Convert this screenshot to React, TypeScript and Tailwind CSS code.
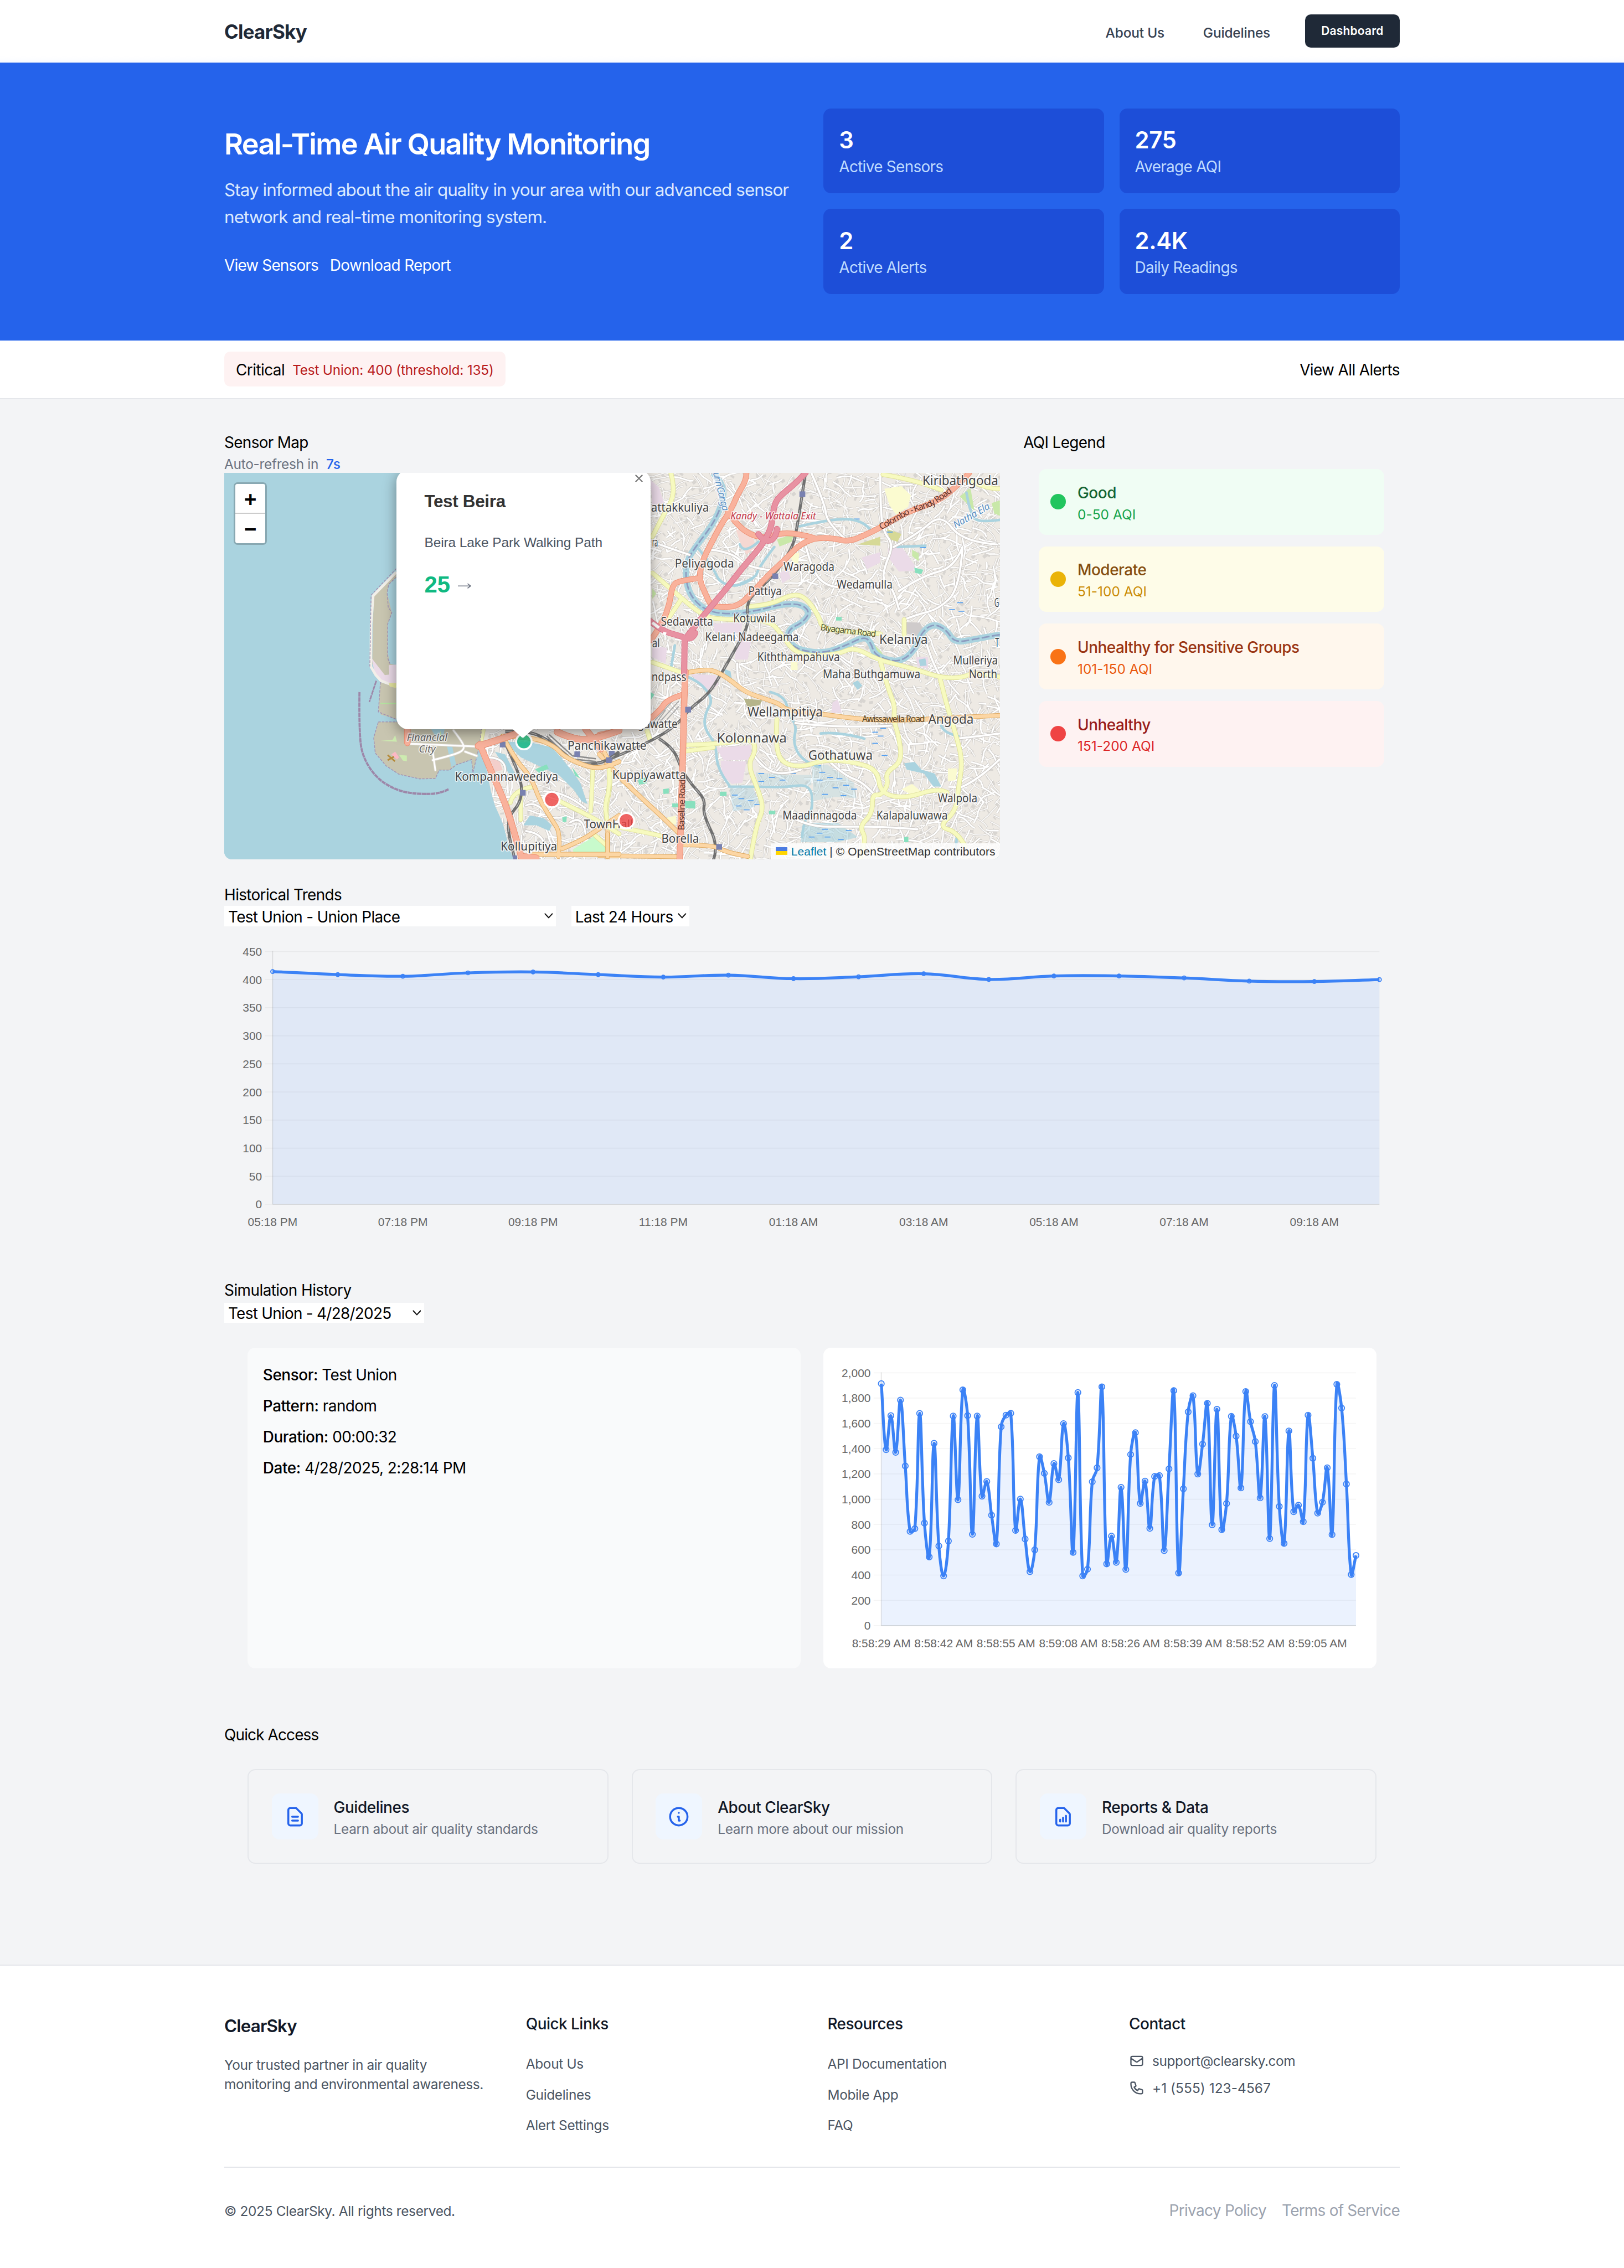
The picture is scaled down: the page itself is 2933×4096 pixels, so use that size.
import React from "react";

type Pt = [number, number];

/* Lowers a line of text by one pixel without changing the height of its row. */
const DROP = "pt-px -mb-px";

/* ---------- shared icons ---------- */

const ICONS = {
  document:
    "M9 12h6m-6 4h6m2 5H7a2 2 0 01-2-2V5a2 2 0 012-2h5.586a1 1 0 01.707.293l5.414 5.414a1 1 0 01.293.707V19a2 2 0 01-2 2z",
  info: "M13 16h-1v-4h-1m1-4h.01M21 12a9 9 0 11-18 0 9 9 0 0118 0z",
  report:
    "M9 17v-2m3 2v-4m3 4v-6m2 10H7a2 2 0 01-2-2V5a2 2 0 012-2h5.586a1 1 0 01.707.293l5.414 5.414a1 1 0 01.293.707V19a2 2 0 01-2 2z",
  mail: "M3 8l7.89 5.26a2 2 0 002.22 0L21 8M5 19h14a2 2 0 002-2V7a2 2 0 00-2-2H5a2 2 0 00-2 2v10a2 2 0 002 2z",
  phone:
    "M3 5a2 2 0 012-2h3.28a1 1 0 01.948.684l1.498 4.493a1 1 0 01-.502 1.21l-2.257 1.13a11.042 11.042 0 005.516 5.516l1.13-2.257a1 1 0 011.21-.502l4.493 1.498a1 1 0 01.684.949V19a2 2 0 01-2 2h-1C9.716 21 3 14.284 3 6V5z",
};

function Icon({ d, className }: { d: string; className: string }) {
  return (
    <svg viewBox="0 0 24 24" fill="none" stroke="currentColor" strokeWidth="2" strokeLinecap="round" strokeLinejoin="round" className={className}>
      <path d={d} />
    </svg>
  );
}

/* ---------- header and hero ---------- */

function Header() {
  return (
    <header className="relative z-10 -mb-px h-[65px] bg-linear-to-b from-white from-90% to-[#f9fbff]">
      <div className="mx-auto flex h-16 w-[1216px] items-center">
        <span className="pt-0.5 text-[20px] leading-7 font-bold tracking-[-0.023em] text-[#1f2937]">ClearSky</span>
        <nav className="ml-auto flex items-center text-[14px] leading-5 font-medium tracking-[-0.008em] text-[#374151]">
          <a className="mt-1">About Us</a>
          <a className="mt-1 ml-10">Guidelines</a>
          <a className="ml-9 flex h-[34px] w-[98px] items-center justify-center rounded-[6px] bg-[#1f2937] pt-px text-[12px] font-semibold tracking-[0.01em] text-white">
            Dashboard
          </a>
        </nav>
      </div>
    </header>
  );
}

const STATS = [
  ["3", "Active Sensors"],
  ["275", "Average AQI"],
  ["2", "Active Alerts"],
  ["2.4K", "Daily Readings"],
];

function Hero() {
  return (
    <section className="bg-[#2563eb] py-12 text-white">
      <div className="mx-auto grid h-48 w-[1216px] grid-cols-2 items-center gap-6">
        <div className={DROP}>
          <h1 className="mb-4 text-[30px] leading-9 font-semibold tracking-[-0.033em] whitespace-nowrap">Real-Time Air Quality Monitoring</h1>
          <p className="mb-6 text-[18px] leading-7 tracking-[-0.0301em] whitespace-nowrap text-[#dbeafe]">
            Stay informed about the air quality in your area with our advanced sensor
            <br />
            network and real-time monitoring system.
          </p>
          <div className="flex gap-3">
            <span className="tracking-[-0.03em]">View Sensors</span>
            <span className="tracking-[-0.023em]">Download Report</span>
          </div>
        </div>
        <div className="grid grid-cols-2 gap-4">
          {STATS.map(([value, label]) => (
            <div key={label} className="rounded-lg bg-[#1d4ed8] p-4">
              <div className={DROP}>
                <div className="text-[24px] leading-8 font-semibold tracking-[-0.01em]">{value}</div>
                <div className="leading-6 tracking-[-0.025em] text-[#bfdbfe]">{label}</div>
              </div>
            </div>
          ))}
        </div>
      </div>
    </section>
  );
}

function AlertBar() {
  return (
    <section className="border-b-[1.2px] border-[#e5e7eb] bg-white py-3">
      <div className="mx-auto flex w-[1216px] items-center justify-between">
        <div className="flex h-9 items-center gap-2 rounded-md bg-[#fef2f2] px-3">
          <span className={`tracking-[-0.02em] ${DROP}`}>Critical</span>
          <span className={`text-[14px] leading-5 tracking-[-0.0095em] text-[#b91c1c] ${DROP}`}>Test Union: 400 (threshold: 135)</span>
        </div>
        <span className={`tracking-[-0.022em] ${DROP}`}>View All Alerts</span>
      </div>
    </section>
  );
}

/* ---------- map ---------- */

const p = (pts: number[]) => {
  let d = "";
  for (let i = 0; i < pts.length; i += 2) d += `${i ? "L" : "M"}${pts[i]} ${pts[i + 1]}`;
  return d;
};

/* Rounded polyline: quadratic curves through segment midpoints. */
const smooth = (pts: number[]) => {
  if (pts.length < 6) return p(pts);
  let d = `M${pts[0]} ${pts[1]}`;
  for (let i = 2; i < pts.length - 2; i += 2) {
    const last = i === pts.length - 4;
    const mx = last ? pts[i + 2] : (pts[i] + pts[i + 2]) / 2;
    const my = last ? pts[i + 3] : (pts[i + 1] + pts[i + 3]) / 2;
    d += `Q${pts[i]} ${pts[i + 1]} ${mx} ${my}`;
  }
  return d;
};

function random(seed: number) {
  let s = seed;
  return () => {
    s = (s * 1664525 + 1013904223) % 4294967296;
    return s / 4294967296;
  };
}

const MINOR = (() => {
  const r = random(41);
  let streets = "";
  let lanes = "";
  let blocks = "";
  for (let gy = -4; gy < 404; gy += 8.5) {
    for (let gx = 266; gx < 806; gx += 8.5) {
      if (gx < 436 && gy < 262) continue;
      let x = gx + r() * 8;
      let y = gy + r() * 8;
      const base = Math.sin(gx / 60) * 0.6 + Math.cos(gy / 50) * 0.6 + (r() < 0.5 ? 0 : Math.PI / 2);
      const x0 = x;
      const y0 = y;
      let d = `M${x.toFixed(1)} ${y.toFixed(1)}`;
      let a = base;
      const n = 2 + Math.floor(r() * 3);
      for (let k = 0; k < n; k++) {
        a += (r() - 0.5) * 0.9;
        const len = 3 + r() * 6;
        x += Math.cos(a) * len;
        y += Math.sin(a) * len;
        d += `L${x.toFixed(1)} ${y.toFixed(1)}`;
      }
      if (r() < 0.4) streets += d;
      else lanes += d;
      blocks += `M${(x0 + 2).toFixed(1)} ${(y0 + 3).toFixed(1)}l${(r() * 6 - 3).toFixed(1)} ${(r() * 6 - 3).toFixed(1)}`;
    }
  }
  return { streets, lanes, blocks };
})();

const COLLECTORS = [
  [1060, 34, 1060, 150, 1070, 260, 1110, 310, 1075, 400, 1070, 450, 1110, 480, 1130, 560],
  [800, 34, 850, 150, 860, 230, 940, 300],
  [1110, 320, 1200, 270, 1290, 190, 1370, 300, 1500, 310],
  [780, 320, 800, 400, 850, 470, 950, 480, 1060, 460],
  [1130, 490, 1220, 430, 1340, 400, 1370, 320],
  [1370, 320, 1360, 480, 1280, 560, 1200, 580, 1150, 600],
  [1230, 680, 1260, 780, 1290, 825],
  [520, 770, 520, 850, 560, 870, 600, 900],
  [740, 1000, 900, 1020, 1100, 1010],
  [580, 1120, 620, 1180, 700, 1200, 760, 1180],
  [700, 1350, 780, 1400, 950, 1400, 1060, 1400, 1200, 1410],
  [1350, 1060, 1440, 1050, 1510, 1040],
  [1360, 1250, 1430, 1220, 1510, 1140],
  [420, 330, 500, 340, 560, 400, 650, 410],
  [200, 300, 280, 330, 340, 350],
  [860, 1140, 920, 1200, 1000, 1230, 1040, 1280],
];
const YELLOW_E = [
  [200, 420, 290, 500, 390, 585, 450, 600, 640, 600, 690, 660, 730, 720, 790, 740, 900, 735, 960, 705, 1050, 755, 1130, 775, 1200, 795, 1290, 825, 1370, 825, 1420, 800, 1510, 822],
  [560, 550, 640, 545, 730, 500, 780, 515, 830, 590, 840, 635, 960, 650, 1060, 655],
  [270, 34, 290, 110, 240, 200, 200, 280],
  [1070, 40, 1200, 62, 1290, 100],
  [1400, 65, 1460, 95, 1512, 95],
  [1060, 760, 1090, 870, 1115, 930, 1110, 990, 1130, 1050, 1142, 1150, 1080, 1190, 1090, 1240, 1060, 1280, 1030, 1275, 1030, 1350, 980, 1400, 1010, 1450, 980, 1530],
  [1285, 825, 1310, 930, 1350, 1060, 1370, 1150, 1355, 1250, 1345, 1340, 1280, 1400, 1350, 1420, 1380, 1475],
  [670, 985, 665, 1060, 680, 1150, 760, 1172, 850, 1140, 960, 1150, 1050, 1180, 1060, 1270, 1150, 1292, 1280, 1250, 1312, 1268],
  [325, 1085, 460, 1080, 580, 1060, 590, 1110, 560, 1160, 600, 1260, 620, 1330, 590, 1400, 570, 1525],
  [325, 1108, 430, 1094],
  [1150, 600, 1150, 660],
  [60, 1400, 130, 1412, 230, 1435],
  [40, 1180, 42, 1250, 20, 1340, 32, 1400],
  [200, 765, 320, 808],
  [310, 520, 250, 612],
  [180, 1030, 190, 1060],
];
const TRUNK_E = [
  [555, 34, 555, 60, 520, 120, 500, 170, 455, 240, 420, 310, 390, 370, 375, 440, 400, 500, 420, 545, 455, 552, 520, 550, 570, 505, 640, 425, 700, 370, 750, 315, 810, 285, 880, 285, 940, 300, 1000, 275, 1060, 245, 1160, 185, 1260, 150, 1330, 105, 1395, 34],
  [485, 185, 520, 235, 570, 272, 620, 285, 720, 258, 810, 285],
  [375, 440, 300, 450, 275, 470, 265, 540, 240, 610, 195, 680],
  [315, 890, 255, 910, 230, 950, 190, 985],
  [0, 1045, 70, 1030],
];
const MOTOR_E = [
  [778, 34, 740, 75, 690, 115, 660, 150, 650, 240, 630, 285, 600, 330, 540, 400, 480, 480, 430, 540, 380, 600, 335, 660],
  [190, 605, 240, 645, 300, 662, 350, 680, 362, 652],
  [322, 670, 320, 810],
  [600, 270, 620, 300, 665, 290, 670, 250],
];
const ORANGE_E = [
  [330, 805, 400, 792, 440, 800, 490, 830, 550, 880, 620, 905, 680, 925, 705, 950, 840, 965, 980, 985, 1100, 990, 1240, 985, 1512, 970],
  [90, 1222, 170, 1300, 240, 1365, 300, 1425],
  [310, 1470, 430, 1470, 480, 1500, 560, 1515],
  [0, 1120, 40, 1168, 95, 1228],
  [32, 1400, 32, 1530],
  [0, 1512, 300, 1516],
];
const RIVER = [430, 34, 470, 80, 465, 150, 430, 230, 370, 310, 330, 370, 325, 450, 350, 520, 410, 570, 500, 580, 600, 565, 690, 540, 760, 540, 795, 570, 770, 610, 710, 640, 715, 690, 760, 720, 850, 730, 930, 700, 1000, 665, 1025, 690, 1040, 740, 1130, 768, 1190, 720, 1215, 650, 1260, 615, 1310, 640, 1340, 690, 1420, 675, 1512, 658];
const STREAMS = [
  [535, 460, 590, 440, 600, 400, 660, 320],
  [755, 240, 880, 210, 990, 215, 1020, 250],
  [370, 320, 430, 400, 455, 460, 530, 475, 580, 440],
  [1385, 110, 1400, 200, 1440, 225, 1512, 215],
  [645, 880, 700, 895, 715, 970, 745, 1010, 730, 1080, 770, 1150, 830, 1170],
  [330, 820, 380, 840, 430, 910, 400, 960, 395, 1020, 440, 1080, 445, 1180, 490, 1240],
  [490, 1245, 600, 1245, 700, 1248, 800, 1235, 805, 1340, 770, 1380, 765, 1440],
  [835, 1040, 900, 1032, 1000, 1060],
  [285, 700, 270, 790],
  [1125, 320, 1230, 315],
  [530, 310, 545, 350, 600, 300],
  [1290, 1010, 1300, 1040, 1355, 1050],
  [1340, 1525, 1350, 1430],
];
const RAIL_E = [
  [778, 34, 765, 120, 745, 250, 730, 320, 660, 430, 570, 510, 555, 560, 565, 620, 510, 720, 460, 810, 410, 890, 340, 945, 300, 1000, 230, 1050, 130, 1100, 38, 1140],
  [225, 1060, 280, 1095, 310, 1180, 350, 1240, 400, 1295, 390, 1350, 450, 1475, 430, 1530],
];
const STATIONS_E: Pt[] = [[766, 116], [664, 433], [335, 948], [38, 1143], [452, 1478], [47, 1118]];

const RAIL_W = [
  [1120, 1100, 1160, 1180, 1195, 1260, 1190, 1330, 1140, 1380, 1145, 1460, 1168, 1530],
  [1130, 1080, 1210, 1075, 1290, 1105, 1350, 1150, 1400, 1190, 1470, 1195, 1530, 1180, 1570, 1150],
];
const TRUNK_W = [
  [1025, 1130, 1060, 1122, 1130, 1100, 1180, 1085],
  [1032, 1125, 1080, 1230, 1130, 1330, 1170, 1450, 1195, 1530],
  [752, 1070, 752, 1118],
  [1330, 1080, 1400, 1110, 1480, 1105, 1570, 1075],
  [1440, 1070, 1500, 1140],
  [1190, 1520, 1250, 1525],
];
const ORANGE_W = [
  [1125, 1095, 1240, 1100, 1320, 1130, 1360, 1170, 1460, 1208, 1520, 1205, 1570, 1185],
  [1120, 1095, 1170, 1180, 1230, 1240, 1262, 1320, 1310, 1390, 1345, 1440, 1335, 1520],
  [1350, 1492, 1420, 1465, 1480, 1430, 1570, 1375],
  [1240, 1512, 1570, 1512],
  [1525, 1440, 1525, 1520],
  [1500, 1130, 1540, 1200],
];
const YELLOW_W = [
  [1230, 1275, 1160, 1288, 1150, 1330],
  [1190, 1300, 1190, 1390],
  [1340, 1325, 1430, 1365, 1500, 1400, 1570, 1440],
  [1468, 1210, 1465, 1290, 1460, 1360],
  [1530, 1205, 1535, 1280, 1510, 1350, 1530, 1410],
  [1035, 1120, 1045, 1075],
  [1470, 1440, 1520, 1480],
];
const STREETS_W = [
  [760, 1122, 900, 1127, 1025, 1132],
  [850, 1180, 940, 1160, 975, 1140, 960, 1110, 930, 1075],
  [850, 1150, 860, 1215],
  [975, 1150, 1020, 1165],
  [1060, 1170, 1110, 1170, 1140, 1220, 1110, 1250],
  [1210, 1340, 1250, 1320, 1300, 1380],
  [1280, 1290, 1360, 1290, 1440, 1350],
  [1380, 1400, 1430, 1370, 1440, 1440],
  [1210, 1430, 1290, 1440, 1280, 1500],
];

function Roads({ lines, casing, fill, width }: { lines: number[][]; casing: string; fill: string; width: number }) {
  const d = lines.map(smooth).join("");
  return (
    <g fill="none" strokeLinecap="round" strokeLinejoin="round">
      <path d={d} stroke={casing} strokeWidth={width + 4} />
      <path d={d} stroke={fill} strokeWidth={width} />
    </g>
  );
}

function Rails({ lines }: { lines: number[][] }) {
  const d = lines.map(smooth).join("");
  return (
    <g fill="none">
      <path d={d} stroke="#707070" strokeWidth="11" />
      <path d={d} stroke="#b5b5b5" strokeWidth="3" strokeDasharray="26 22" />
    </g>
  );
}

const EAST = "matrix(0.27423 0 0 0.26786 388 -9)";
const WEST = "matrix(0.26786 0 0 0.29337 -12 -49)";
const ex = (x: number) => x * 0.27423 + 388;
const ey = (y: number) => y * 0.26786 - 9;

/* Place names: text, left, right, centre line, font size, in the east grid. */
const PLACES: [string, number, number, number, number][] = [
  ["attakkuliya", 195, 413, 168, 12],
  ["ra", 199, 221, 302, 12],
  ["Peliyagoda", 285, 508, 384, 12],
  ["Kiribathgoda", 1219, 1505, 63, 13.5],
  ["Waragoda", 695, 887, 396, 12],
  ["Wedamulla", 896, 1106, 465, 12],
  ["Pattiya", 562, 688, 491, 12],
  ["Kotuwila", 505, 666, 594, 12],
  ["Sedawatta", 232, 429, 607, 12],
  ["Kelani Nadeegama", 399, 752, 667, 12],
  ["Kelaniya", 1056, 1239, 676, 13.5],
  ["al", 199, 228, 692, 12],
  ["Kiththampahuva", 596, 907, 744, 12],
  ["Maha Buthgamuwa", 843, 1211, 810, 12],
  ["Mulleriya", 1335, 1503, 758, 12],
  ["North", 1394, 1501, 810, 12],
  ["ndpass", 197, 328, 821, 12],
  ["Wellampitiya", 559, 843, 957, 13.5],
  ["Angoda", 1241, 1412, 985, 13.5],
  ["gawatte", 145, 295, 1004, 12],
  ["Kolonnawa", 443, 707, 1056, 14],
  ["Gothatuwa", 788, 1031, 1124, 13],
  ["Panchikawatte", -120, 178, 1086, 12],
  ["Kuppiyawatta", 49, 327, 1199, 12],
  ["Maadinnagoda", 691, 971, 1357, 12],
  ["Kalapaluwawa", 1045, 1314, 1356, 12],
  ["Walpola", 1277, 1426, 1290, 12],
  ["Borella", 234, 376, 1446, 12.5],
  ["TownHall", -58, 127, 1391, 12],
  ["G", 1490, 1508, 534, 12],
  ["T", 1493, 1508, 690, 12],
  ["Kompannaweediya", -545, -155, 1206, 12.5],
  ["Kollupitiya", -372, -159, 1475, 12.5],
];

function SensorMap() {
  return (
    <div className="relative h-[400px] overflow-hidden rounded-b-lg bg-[#aad3df]">
      <svg viewBox="0 0 802.67 400" width="802.67" height="400" className="block" fontFamily="'Noto Sans', sans-serif">
        <defs>
          <clipPath id="land">
            <path d={`${p([264, 275, 270, 300, 276, 330, 280, 344, 288, 362, 296, 391, 300, 402])}L804 402L804 -2L436 -2L436 262L264 262Z`} />
          </clipPath>
        </defs>
        <rect width="803" height="400" fill="#aad3df" />

        {/* mainland */}
        <g clipPath="url(#land)">
          <rect width="803" height="400" fill="#eeeae4" />
          <path d={MINOR.blocks} stroke="#d8d5d1" strokeWidth="4" fill="none" />
          <path d={MINOR.lanes} stroke="#cbc8c4" strokeWidth="1.9" fill="none" />
          <path d={MINOR.lanes} stroke="#fbfaf9" strokeWidth="1.1" fill="none" />
          <path d={MINOR.streets} stroke="#c6c3bf" strokeWidth="2.5" fill="none" />
          <path d={MINOR.streets} stroke="#ffffff" strokeWidth="1.7" fill="none" />

          <g transform={EAST}>
            <g fill="#ebdbe8">
              <path d="M440 1095L570 1085L575 1140L470 1145Z" />
              <path d="M458 1145L555 1148L540 1230L500 1235L462 1200Z" />
              <path d="M525 660L575 670L560 755L510 755Z" />
              <path d="M1090 325L1140 318L1190 390L1185 412L1130 415L1090 360Z" />
              <path d="M990 360L1060 340L1060 380L1010 405Z" />
              <path d="M345 810L440 815L450 850L410 885Z" />
              <path d="M430 615L540 612L535 655L435 650Z" />
              <path d="M193 60L225 90L245 150L200 160Z" />
              <path d="M200 700L255 710L250 770L200 745Z" />
              <path d="M880 920L900 908L915 960L875 960Z" />
              <path d="M680 420L710 405L722 440L690 460Z" />
              <path d="M1195 745L1240 745L1240 790L1200 780Z" />
            </g>
            <path d="M515 250L580 280L590 320L555 350L530 300Z" fill="#f6d8d2" />
            <g fill="#c9e8a9">
              <path d="M670 290L735 270L725 300L680 318Z" />
              <path d="M1180 330L1205 345L1205 375L1180 355Z" />
              <path d="M1400 90L1415 180L1385 150L1360 125Z" />
              <path d="M1480 150L1511 140L1511 200L1490 190Z" />
              <path d="M200 480L215 500L200 520Z" />
              <path d="M1030 690L1060 720L1080 750L1045 740Z" />
              <path d="M0 1430L20 1470L20 1500L0 1500Z" />
            </g>
            <g fill="#fbfbd0">
              <path d="M1075 95L1140 85L1175 120L1165 165L1120 195L1095 160Z" />
              <path d="M1140 1255L1180 1235L1215 1265L1190 1285Z" />
              <path d="M1315 1175L1350 1175L1345 1220L1315 1225Z" />
              <path d="M722 350L755 340L750 385L728 380Z" />
              <path d="M722 765L748 765L748 795L722 795Z" />
              <path d="M255 1365L290 1358L290 1392L252 1390Z" />
            </g>
            <path d="M545 905L615 912L605 930L560 940Z" fill="#b5b48a" />
            <path d="M1155 610L1210 612L1225 650L1205 665L1160 655Z" fill="#cfcbcb" />
            <path d="M1085 250L1140 270L1125 300L1095 290ZM975 310L1060 280L1060 315Z" fill="#d6d996" />
            <g fill="#88e0be">
              <path d="M1188 400L1222 408L1215 425L1192 420ZM145 1215L178 1210L178 1232L150 1238ZM455 1265L480 1265L480 1282L455 1282ZM240 1255L262 1252L262 1272L242 1274ZM275 1310L300 1310L300 1325L275 1325ZM640 1338L664 1338L664 1352L640 1352ZM893 590L914 590L914 604L893 604ZM1150 1440L1166 1440L1166 1460L1150 1460ZM193 880L208 890L195 910ZM322 1300L362 1302L362 1330L325 1328Z" />
            </g>
            <g fill="#aad3df">
              <path d="M1150 1155L1190 1150L1215 1180L1265 1195L1290 1245L1260 1245L1225 1195L1160 1180Z" />
              <path d="M490 1240L520 1250L580 1250L605 1310L570 1330L505 1340Z" opacity=".45" />
              <path d="M800 1165L860 1160L960 1230L970 1290L890 1285L810 1300Z" opacity=".35" />
              <path d="M590 1190L700 1200L800 1200L800 1240L600 1240Z" opacity=".35" />
              <path d="M770 1385L900 1385L975 1440L900 1460L760 1460Z" opacity=".6" />
              <path d="M955 845L975 835L992 855L975 872Z" />
              <path d="M1205 755L1230 750L1235 778L1210 780Z" />
              <path d="M470 790L495 800L500 830L478 825Z" />
            </g>
            <g stroke="#4f9cf0" strokeWidth="3.5" fill="none">
              {[
                [600, 1195], [640, 1210], [600, 1225], [680, 1220], [720, 1195], [815, 1165], [830, 1190], [860, 1210], [820, 1220], [895, 1215],
                [920, 1240], [950, 1255], [880, 1250], [910, 1280], [840, 1275], [500, 1278], [525, 1292], [560, 1300], [515, 1320], [545, 1335],
                [585, 1315], [800, 1395], [840, 1410], [880, 1400], [930, 1415], [790, 1440], [850, 1440], [820, 1425], [900, 1450], [1030, 1035],
                [1060, 1020], [1050, 1050], [1030, 1078], [1065, 1125], [960, 212], [1350, 535], [1320, 562], [1355, 568], [1085, 262], [1140, 320], [1210, 322],
              ].map(([x, y], i) => (
                <path key={i} d={`M${x} ${y}h22`} />
              ))}
            </g>
            <path d={STREAMS.map(smooth).join("")} fill="none" stroke="#aad3df" strokeWidth="10" strokeLinecap="round" />
            <path d={smooth(RIVER)} fill="none" stroke="#aad3df" strokeWidth="24" />
            <path d={smooth(RIVER)} fill="none" stroke="#8d9cc0" strokeWidth="6" strokeDasharray="30 9" />
            <Roads lines={COLLECTORS} casing="#c8c4c0" fill="#ffffff" width={8} />
            <Roads lines={YELLOW_E} casing="#dfe09a" fill="#f7fabf" width={14} />
            <path d="M200 1000L290 900M215 1010L300 915M230 1015L300 935M200 1020L250 950" stroke="#aaa" strokeWidth="4" fill="none" />
            <Rails lines={RAIL_E} />
            <Roads lines={ORANGE_E} casing="#e0ab63" fill="#fcd6a4" width={14} />
            <Roads lines={TRUNK_E} casing="#ee8f72" fill="#f9b29c" width={18} />
            <Roads lines={[[325, 800, 320, 900, 316, 1100, 311, 1250, 303, 1535]]} casing="#ee8f72" fill="#f9b29c" width={20} />
            <Roads lines={MOTOR_E} casing="#dc6f88" fill="#e892a2" width={19} />
            <path d="M200 612L225 632M240 652L252 656" stroke="#fff" strokeWidth="11" />
            <g fill="#7981b0">
              {STATIONS_E.map(([x, y], i) => (
                <rect key={i} x={x - 11} y={y - 11} width="22" height="22" />
              ))}
            </g>
          </g>

          <g transform={WEST}>
            <g fill="#aad3df">
              <path d="M1140 1115L1230 1118L1310 1135L1345 1170L1385 1215L1420 1260L1448 1335L1425 1325L1395 1285L1340 1235L1270 1205L1190 1170L1150 1135Z" />
              <path d="M1225 1375L1280 1385L1310 1410L1300 1430L1250 1410L1200 1410Z" />
              <path d="M1090 1150L1130 1160L1175 1240L1160 1250Z" />
            </g>
            <g fill="#88e0be">
              <path d="M1245 1212L1290 1195L1298 1210L1260 1225ZM1388 1205L1405 1225L1420 1245L1400 1235ZM1350 1382L1368 1378L1366 1398L1352 1398Z" />
            </g>
            <path d="M1390 1495L1480 1445L1525 1500L1525 1508L1395 1508Z" fill="#c8facc" />
            <path d="M1070 1175L1105 1175L1120 1215L1090 1220Z" fill="#f3cfcb" />
            <Roads lines={STREETS_W.slice(4)} casing="#c8c4c0" fill="#fff" width={7} />
            <Roads lines={YELLOW_W} casing="#dfe09a" fill="#f7fabf" width={13} />
            <Rails lines={RAIL_W} />
            <path d="M1290 1095L1380 1175L1480 1185M1300 1090L1390 1165L1480 1175" stroke="#8a8a8a" strokeWidth="5" fill="none" />
            <Roads lines={ORANGE_W} casing="#e0ab63" fill="#fcd6a4" width={13} />
            <g fill="#7981b0">
              {[[1120, 1125], [1198, 1295], [1408, 1159], [1530, 1180], [1165, 1526]].map(([x, y], i) => (
                <rect key={i} x={x - 11} y={y - 10} width="22" height="20" />
              ))}
            </g>
          </g>
        </g>

        {/* port city and harbour */}
        <g transform={WEST}>
          <path d="M709 520L622 602L616 840L660 900L709 915L709 845L685 840L676 800L676 700L692 660L674 590L680 560L709 535Z" fill="#c8c5b0" />
          <path d="M614 820L665 880L682 878L680 845L709 843L709 920L660 905L625 870Z" fill="#ebdbe8" />
          <path d="M709 517L620 600L612 700L611 850L630 880L650 900L709 922" fill="none" stroke="#f2efe9" strokeWidth="10" />
          <path d="M709 505L612 598L607 850M709 535L680 560L674 590L678 640L692 660L676 700L676 820L685 840" fill="none" stroke="#a292b4" strokeWidth="3" strokeDasharray="9 5" />
          <path d="M648 905L709 925L709 1036L690 1030L650 1020L640 1000Z" fill="#c8c5b0" />
          <path d="M648 905L640 1010L709 1036" fill="none" stroke="#a292b4" strokeWidth="3" strokeDasharray="9 5" />
          <path d="M648 980L709 980" stroke="#b5e3a0" strokeWidth="4" />
          <path d="M680 908h29v18l-25-6z" fill="#e6e6a0" />
          <path d="M640 1045L900 1045L1040 1060L1030 1130L1005 1225L1000 1178L940 1197L915 1215L875 1215L860 1245L800 1246L720 1230L670 1200L628 1155L622 1100Z" fill="#c8c5b0" stroke="#a292b4" strokeWidth="3" strokeDasharray="9 5" />
          <path d="M905 1130L925 1130L940 1195L922 1205ZM830 1050L900 1050L890 1100L870 1110Z" fill="#aad3df" />
          <path d="M648 1112L695 1108L705 1092L712 1115ZM720 1162L750 1164L750 1184L735 1182ZM880 1075L890 1115L875 1110Z" fill="#cdebb0" />
          <path d="M690 1160L705 1150L720 1170L712 1178Z" fill="#fbb8c4" />
          <path d="M676 1162L704 1184M676 1180L700 1168" stroke="#b58a3a" strokeWidth="6" />
          <Roads lines={STREETS_W.slice(0, 4)} casing="#d8d5cc" fill="#fff" width={6} />
          <g fill="none" stroke="#9d87a9" strokeWidth="8" strokeDasharray="16 2">
            <path d={smooth([567, 940, 565, 1100, 585, 1180, 640, 1250, 720, 1290, 800, 1300, 880, 1298, 912, 1282])} />
            <path d="M632 900L605 975" strokeWidth="6" />
          </g>
          <Roads lines={TRUNK_W} casing="#ee8f72" fill="#f9b29c" width={21} />
        </g>

        {/* labels */}
        <g fill="#444" stroke="#fff" strokeOpacity=".75" strokeWidth="2" paintOrder="stroke" strokeLinejoin="round">
          {PLACES.map(([t, a, b, c, s]) => (
            <text key={t + a} x={ex(a)} y={ey(c) + s * 0.36} fontSize={s} textLength={(b - a) * 0.27423} lengthAdjust="spacingAndGlyphs">
              {t}
            </text>
          ))}
          <g fontStyle="italic" fontSize="10.5" fill="#666" textAnchor="middle">
            <text x="209.8" y="277">Financial</text>
            <text x="210" y="289.5">City</text>
          </g>
          <g fontSize="9" textAnchor="middle" strokeWidth="0" fill="#5d3128">
            <path id="kandy-road" d={`M${ex(1050)} ${ey(262)}L${ex(1170)} ${ey(192)}L${ex(1260)} ${ey(160)}L${ex(1345)} ${ey(98)}`} fill="none" stroke="none" />
            <text>
              <textPath href="#kandy-road" startOffset="50%" textLength="84">Colombo - Kandy Road</textPath>
            </text>
            <text transform={`translate(${ex(311) + 3.2} ${ey(1315)}) rotate(-89)`} textLength="53">Baseline Road</text>
            <text fill="#5a4526" transform={`translate(${ex(1110)} ${ey(985) + 3}) rotate(0)`} textLength="65">Awissawella Road</text>
            <text fill="#555533" transform={`translate(${ex(938)} ${ey(645) + 2.5}) rotate(7)`} textLength="58">Biyagama Road</text>
          </g>
          <g fontStyle="italic" fontSize="10" textAnchor="middle" fill="#5a90c4">
            <text transform={`translate(${ex(1410)} ${ey(198) + 3}) rotate(-30)`} textLength="42">Natha Ela</text>
            <text transform={`translate(${ex(447)} ${ey(108)}) rotate(76)`} textLength="41">unn Ganga</text>
          </g>
          <text fontStyle="italic" fontSize="10.5" fill="#c43a4b" x={ex(495)} y={ey(200) + 3.8} textLength="88.5" lengthAdjust="spacingAndGlyphs">
            Kandy - Wattala Exit
          </text>
        </g>

        {/* sensors */}
        <g stroke="#fff" strokeWidth="2">
          <circle cx="310" cy="278" r="8" fill="#10b981" fillOpacity=".8" />
          <circle cx="338.9" cy="338" r="8" fill="#ef4444" fillOpacity=".8" />
          <circle cx="416" cy="359.8" r="8" fill="#ef4444" fillOpacity=".8" />
        </g>
      </svg>

      {/* popup */}
      <div className="absolute top-[-3px] left-[178px] h-[268px] w-[263px] rounded-xl bg-white shadow-[0_3px_14px_rgba(0,0,0,0.4)]">
        <div className="flex h-full flex-col pt-[23px] pl-[29px] font-['Liberation_Sans',sans-serif]">
          <div className="text-[18px] leading-5 font-bold tracking-[-0.01em] text-[#333]">Test Beira</div>
          <div className="mt-[22.5px] text-[14px] leading-5 tracking-[-0.003em] text-[#4b5563]">Beira Lake Park Walking Path</div>
          <div className="mt-[17.5px] flex h-8 items-center gap-2 text-[24px] leading-8 font-bold text-[#10b981]">
            25
            <svg viewBox="0 0 14 6" className="mt-0.5 h-1.5 w-3.5 text-[#6b7280]" fill="none" stroke="currentColor" strokeWidth="0.9">
              <path d="M0 3H13M10 0.6L13.2 3L10 5.4" />
            </svg>
          </div>
        </div>
        <svg viewBox="0 0 8 8" className="absolute top-[4.5px] right-2 h-2 w-2" stroke="#757575" strokeWidth="1.2">
          <path d="M0.4 0.4L7.6 7.6M7.6 0.4L0.4 7.6" />
        </svg>
        <svg viewBox="0 0 22 10" className="absolute -bottom-[9.5px] left-[120px] h-2.5 w-[22px]" fill="#fff">
          <path d="M0 0H22L12.5 8.6Q11 10 9.5 8.6Z" />
        </svg>
      </div>

      {/* zoom control */}
      <div className="absolute top-2.5 left-2.5 flex w-[34px] flex-col overflow-hidden rounded-[4px] border-2 border-black/20 bg-clip-padding font-['Liberation_Sans',sans-serif] text-[22px] leading-[30px] font-bold text-black">
        <span className="flex h-[31px] items-center justify-center border-b-[1.2px] border-[#ccc] bg-white pt-0.5">+</span>
        <span className="flex h-[30px] items-center justify-center bg-white pt-0.5">−</span>
      </div>

      {/* attribution */}
      <div className="absolute right-0 bottom-0 flex h-[17px] items-center bg-white/80 px-[5px] font-['Liberation_Sans',sans-serif] text-[12px] leading-[17px] tracking-[0.006em] text-[#333]">
        <svg viewBox="0 0 12 8" className="mr-1 h-2 w-3">
          <path fill="#4C7BE1" d="M0 0h12v4H0z" />
          <path fill="#FFD500" d="M0 4h12v4H0z" />
        </svg>
        <span className="whitespace-pre">
          <span className="text-[#0078a8]">Leaflet</span> | © OpenStreetMap contributors
        </span>
      </div>
    </div>
  );
}

/* ---------- AQI legend ---------- */

const LEVELS = [
  { name: "Good", range: "0-50 AQI", card: "bg-[#f0fdf4]", dot: "bg-[#22c55e]", title: "text-[#166534]", sub: "text-[#16a34a]" },
  { name: "Moderate", range: "51-100 AQI", card: "bg-[#fefce8]", dot: "bg-[#eab308]", title: "text-[#854d0e]", sub: "text-[#ca8a04]" },
  { name: "Unhealthy for Sensitive Groups", range: "101-150 AQI", card: "bg-[#fff7ed]", dot: "bg-[#f97316]", title: "text-[#9a3412]", sub: "text-[#ea580c]" },
  { name: "Unhealthy", range: "151-200 AQI", card: "bg-[#fef2f2]", dot: "bg-[#ef4444]", title: "text-[#991b1b]", sub: "text-[#dc2626]" },
];

function Legend() {
  return (
    <div>
      <div className={`tracking-[-0.024em] ${DROP}`}>AQI Legend</div>
      <div className="flex flex-col gap-3 p-4">
        {LEVELS.map((l) => (
          <div key={l.name} className={`flex items-center gap-3 rounded-lg p-3 ${l.card}`}>
            <span className={`h-4 w-4 rounded-full ${l.dot}`} />
            <div className={DROP}>
              <div className={`font-medium tracking-[-0.017em] ${l.title}`}>{l.name}</div>
              <div className={`text-[14px] leading-5 tracking-[0.001em] ${l.sub}`}>{l.range}</div>
            </div>
          </div>
        ))}
      </div>
    </div>
  );
}

/* ---------- charts ---------- */

/* Cardinal spline with tension 0.4, control points capped to the plot area. */
function spline(pts: Pt[], top: number, bottom: number) {
  const t = 0.4;
  const cap = (v: number) => Math.min(bottom, Math.max(top, v));
  const ctl = pts.map((cur, i) => {
    const prev = pts[i - 1] ?? cur;
    const next = pts[i + 1] ?? cur;
    const d01 = Math.hypot(cur[0] - prev[0], cur[1] - prev[1]);
    const d12 = Math.hypot(next[0] - cur[0], next[1] - cur[1]);
    const fa = (t * d01) / (d01 + d12 || 1);
    const fb = (t * d12) / (d01 + d12 || 1);
    return {
      a: [cur[0] - fa * (next[0] - prev[0]), cap(cur[1] - fa * (next[1] - prev[1]))],
      b: [cur[0] + fb * (next[0] - prev[0]), cap(cur[1] + fb * (next[1] - prev[1]))],
    };
  });
  let d = `M${pts[0][0]} ${pts[0][1]}`;
  for (let i = 1; i < pts.length; i++) {
    const { b } = ctl[i - 1];
    const { a } = ctl[i];
    d += `C${b[0].toFixed(2)} ${b[1].toFixed(2)} ${a[0].toFixed(2)} ${a[1].toFixed(2)} ${pts[i][0].toFixed(2)} ${pts[i][1].toFixed(2)}`;
  }
  return d;
}

interface ChartProps {
  width: number;
  height: number;
  left: number;
  right: number;
  top: number;
  bottom: number;
  labelY: number;
  max: number;
  step: number;
  values: number[];
  radius: number;
  labels: string[];
  every: number;
}

function LineChart(c: ChartProps) {
  const dx = (c.right - c.left) / (c.values.length - 1);
  const y = (v: number) => c.bottom - (v / c.max) * (c.bottom - c.top);
  const pts = c.values.map((v, i): Pt => [c.left + i * dx, y(v)]);
  const line = spline(pts, c.top, c.bottom);
  const ticks = Array.from({ length: c.max / c.step + 1 }, (_, i) => i * c.step);
  return (
    <svg viewBox={`0 0 ${c.width} ${c.height}`} width={c.width} height={c.height} className="block overflow-visible" fontFamily="'Liberation Sans', sans-serif" fontSize="12">
      {ticks.map((v) => (
        <path key={v} d={`M${c.left - 8} ${y(v)}H${c.right}`} stroke="#000" strokeOpacity=".04" strokeWidth="1" />
      ))}
      <path d={`${line}V${c.bottom}H${c.left}Z`} fill="#3b82f6" fillOpacity=".1" />
      <path d={`M${c.left} ${c.top - 0.5}V${c.bottom}`} stroke="#000" strokeOpacity=".1" />
      <path d={`M${c.left} ${c.bottom}H${c.right}`} stroke="#000" strokeOpacity=".1" />
      <path d={line} fill="none" stroke="#3b82f6" strokeWidth="3" />
      {pts.map(([px, py], i) => (
        <circle key={i} cx={px} cy={py} r={c.radius} fill="#3b82f6" fillOpacity=".1" stroke="#3b82f6" strokeWidth="1" />
      ))}
      <g fill="#666">
        {ticks.map((v) => (
          <text key={v} x={c.left - 11} y={y(v) + 4.3} textAnchor="end">
            {v.toLocaleString("en-US")}
          </text>
        ))}
        {c.labels.map((l, i) => (
          <text key={l} x={c.left + i * c.every * dx} y={c.labelY + 4.3} textAnchor="middle">
            {l}
          </text>
        ))}
      </g>
    </svg>
  );
}

const TREND = [414.4, 409, 406, 412, 413.6, 409, 404.6, 408, 401.7, 405, 410.5, 400.3, 406.5, 406.5, 403, 397.3, 396.5, 400];
const TREND_LABELS = ["05:18 PM", "07:18 PM", "09:18 PM", "11:18 PM", "01:18 AM", "03:18 AM", "05:18 AM", "07:18 AM", "09:18 AM"];

const SIMULATION = [
  1914, 1392, 1661, 1371, 1784, 1263, 745, 767, 1679, 811, 543, 1442, 630, 393, 669, 1658, 996, 1865, 1661, 722, 1658, 1024, 1140, 874, 646, 1573, 1665, 1680, 753, 1001,
  685, 427, 599, 1336, 1205, 975, 1282, 1154, 1598, 1327, 579, 1844, 393, 446, 1138, 1248, 1889, 488, 708, 500, 1094, 444, 1354, 1526, 967, 1143, 769, 1180, 1187, 593,
  1240, 1859, 416, 1082, 1691, 1819, 1199, 1436, 1759, 797, 1712, 759, 966, 1656, 1499, 1089, 1852, 1614, 1456, 1010, 1654, 688, 1900, 943, 650, 1540, 901, 953, 822, 1665,
  1324, 890, 976, 1248, 720, 1909, 1721, 1120, 404, 555,
];
const SIMULATION_LABELS = ["8:58:29 AM", "8:58:42 AM", "8:58:55 AM", "8:59:08 AM", "8:58:26 AM", "8:58:39 AM", "8:58:52 AM", "8:59:05 AM"];

function Select({ children, className }: { children: React.ReactNode; className: string }) {
  return (
    <div className={`flex h-[21px] items-center justify-between bg-white pr-[3px] pl-1 leading-[21px] whitespace-nowrap ${className}`}>
      <span className={DROP}>{children}</span>
      <svg viewBox="0 0 9 6" className="h-1.5 w-[9px]" fill="none" stroke="#111" strokeWidth="1.2" strokeLinecap="round" strokeLinejoin="round">
        <path d="M0.8 0.8L4.5 4.8L8.2 0.8" />
      </svg>
    </div>
  );
}

function Trends() {
  return (
    <section className="mt-6">
      <div className={`tracking-[-0.0235em] ${DROP}`}>Historical Trends</div>
      <div className="flex gap-4">
        <Select className="w-[343px] tracking-[-0.0255em]">Test Union - Union Place</Select>
        <Select className="w-[122px] tracking-[-0.0225em]">Last 24 Hours</Select>
      </div>
      <div className="p-4">
        <LineChart width={1184} height={300} left={34} right={1179} top={10} bottom={271.5} labelY={289.5} max={450} step={50} values={TREND} radius={2} labels={TREND_LABELS} every={2} />
      </div>
    </section>
  );
}

function Simulation() {
  const rows = [
    ["Sensor:", "Test Union"],
    ["Pattern:", "random"],
    ["Duration:", "00:00:32"],
    ["Date:", "4/28/2025, 2:28:14 PM"],
  ];
  return (
    <section className="mt-8">
      <div className={`tracking-[-0.02em] ${DROP}`}>Simulation History</div>
      <div className="flex h-6 items-start pt-[1.5px]">
        <Select className="w-[206.5px] tracking-[-0.0265em]">Test Union - 4/28/2025</Select>
      </div>
      <div className="grid grid-cols-2 gap-6 p-6">
        <div className="rounded-lg bg-[#f9fafb] p-4">
          <div className={`flex flex-col gap-2 ${DROP}`}>
            {rows.map(([k, v]) => (
              <div key={k} className="leading-6 tracking-[-0.021em]">
                <span className="font-medium tracking-[-0.0165em]">{k}</span> {v}
              </div>
            ))}
          </div>
        </div>
        <div className="rounded-lg bg-white p-4">
          <LineChart width={540} height={300} left={43.9} right={535} top={9.9} bottom={271.4} labelY={289.5} max={2000} step={200} values={SIMULATION} radius={3} labels={SIMULATION_LABELS} every={13} />
        </div>
      </div>
    </section>
  );
}

/* ---------- quick access ---------- */

const QUICK = [
  { icon: ICONS.document, title: "Guidelines", text: "Learn about air quality standards" },
  { icon: ICONS.info, title: "About ClearSky", text: "Learn more about our mission" },
  { icon: ICONS.report, title: "Reports & Data", text: "Download air quality reports" },
];

function QuickAccess() {
  return (
    <section className="mt-8">
      <div className={`tracking-[-0.031em] ${DROP}`}>Quick Access</div>
      <div className="grid grid-cols-3 gap-6 p-6">
        {QUICK.map((q) => (
          <div key={q.title} className="flex h-[98px] items-center gap-4 rounded-lg border-[1.2px] border-[#e5e7eb] px-6">
            <span className="flex h-12 w-12 items-center justify-center rounded-lg bg-[#eff6ff]">
              <Icon d={q.icon} className="h-6 w-6 text-[#2563eb]" />
            </span>
            <div className={`whitespace-nowrap ${DROP}`}>
              <div className="font-medium tracking-[-0.015em] text-[#111827]">{q.title}</div>
              <div className="text-[14px] leading-5 tracking-[-0.0135em] text-[#6b7280]">{q.text}</div>
            </div>
          </div>
        ))}
      </div>
    </section>
  );
}

/* ---------- footer ---------- */

function LinkColumn({ title, links }: { title: string; links: string[] }) {
  return (
    <div>
      <h3 className="mb-4 font-medium tracking-[-0.0184em] text-[#111827]">{title}</h3>
      <ul className="flex flex-col gap-2">
        {links.map((l) => (
          <li key={l} className="flex h-6 items-center pt-0.5 text-[14px]">
            {l}
          </li>
        ))}
      </ul>
    </div>
  );
}

function Footer() {
  return (
    <footer className="border-t-[1.2px] border-[#e5e7eb] bg-white py-12 text-[#4b5563]">
      <div className="mx-auto w-[1216px]">
        <div className={`grid grid-cols-4 gap-8 tracking-[-0.0127em] ${DROP}`}>
          <div>
            <div className="mb-4 text-[18px] leading-7 font-semibold tracking-[-0.0271em] text-[#111827]">ClearSky</div>
            <p className="text-[14px] leading-5 tracking-[-0.016em] whitespace-nowrap">
              Your trusted partner in air quality
              <br />
              monitoring and environmental awareness.
            </p>
          </div>
          <LinkColumn title="Quick Links" links={["About Us", "Guidelines", "Alert Settings"]} />
          <LinkColumn title="Resources" links={["API Documentation", "Mobile App", "FAQ"]} />
          <div>
            <h3 className="mb-4 font-medium tracking-[-0.0184em] text-[#111827]">Contact</h3>
            <div className="flex flex-col gap-2 text-[14px] leading-5">
              <div className="flex items-center gap-2 tracking-[-0.0165em]">
                <Icon d={ICONS.mail} className="h-4 w-4" />
                support@clearsky.com
              </div>
              <div className="flex items-center gap-2 tracking-[0.002em]">
                <Icon d={ICONS.phone} className="h-4 w-4" />
                +1 (555) 123-4567
              </div>
            </div>
          </div>
        </div>
        <div className="mt-8 flex items-center justify-between border-t-[1.2px] border-[#e5e7eb] pt-8">
          <span className={`text-[14px] leading-5 tracking-[-0.015em] ${DROP}`}>© 2025 ClearSky. All rights reserved.</span>
          <div className={`flex gap-4 text-[#9ca3af] ${DROP}`}>
            <span className="tracking-[-0.0235em]">Privacy Policy</span>
            <span className="tracking-[-0.0268em]">Terms of Service</span>
          </div>
        </div>
      </div>
    </footer>
  );
}

export default function App() {
  return (
    <div className="w-[1680px] bg-[#f3f4f6] font-['Inter',sans-serif] text-[16px] leading-6 text-black antialiased [zoom:1.74583]">
      <Header />
      <Hero />
      <AlertBar />
      <main className="mx-auto w-[1216px] pt-8 pb-20">
        <div className="grid grid-cols-3 gap-6">
          <div className="col-span-2">
            <div className={`tracking-[-0.025em] ${DROP}`}>Sensor Map</div>
            <div className={`flex gap-2 text-[14px] leading-5 tracking-[-0.0125em] text-[#6b7280] ${DROP}`}>
              <span>Auto-refresh in</span>
              <span className="font-medium text-[#2563eb]">7s</span>
            </div>
            <SensorMap />
          </div>
          <Legend />
        </div>
        <Trends />
        <Simulation />
        <QuickAccess />
      </main>
      <Footer />
    </div>
  );
}
